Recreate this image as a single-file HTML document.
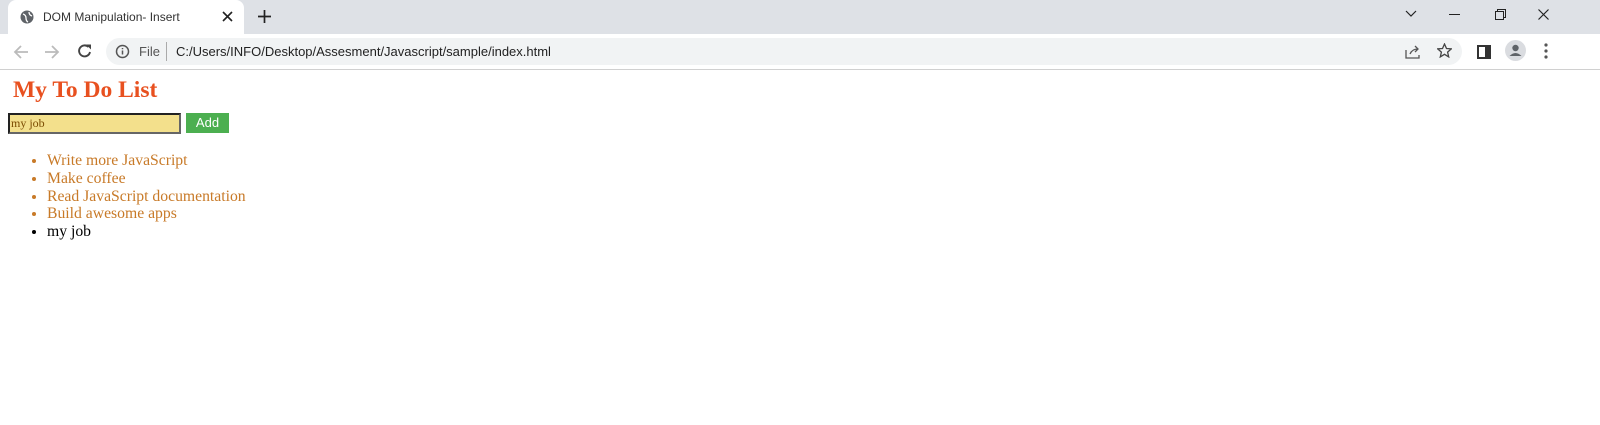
<!DOCTYPE html>
<html><head><style>
body{margin:0;width:1600px;height:425px;background:#fff;position:relative;overflow:hidden;font-family:"Liberation Sans",sans-serif}
.top{position:absolute;left:0;top:0;width:1600px;height:34px;background:#dee1e6}
.tab{position:absolute;left:8px;top:0;width:236px;height:34px;background:#fff;border-radius:8px 8px 0 0}
.bar{position:absolute;left:0;top:34px;width:1600px;height:35px;background:#fff;border-bottom:1px solid #d0d0d0}
.omni{position:absolute;left:106px;top:38px;width:1356px;height:27px;background:#f1f3f4;border-radius:14px}
.t{position:absolute;font-size:12px;color:#333;white-space:nowrap}
h1{position:absolute;left:13px;top:77px;margin:0;font:bold 23.5px "Liberation Serif",serif;color:#e8501f}
.inp{position:absolute;left:8px;top:113px;width:168px;height:17px;background:#f3e08c;border:2px solid #444;border-color:#222 #666 #666 #222;font:12px "Liberation Serif",serif;color:#7a4a00;line-height:17px;padding-left:1px}
.btn{position:absolute;left:186px;top:113px;width:43px;height:20px;background:#4caf50;color:#fff;font-size:13px;text-align:center;line-height:20px}
ul{position:absolute;left:0;top:152px;margin:0;padding-left:47px;font:15.7px/17.8px "Liberation Serif",serif;color:#c87a28}
li::marker{color:#c87a28}
li.k{color:#000}li.k::marker{color:#000}
</style></head><body>
<div class="top"></div>
<div class="tab"></div>
<svg style="position:absolute;left:20px;top:10px" width="14" height="14"><circle cx="7" cy="7" r="6.5" fill="#5f6368"/><path d="M3 4q3 1 3 4t2 4M9 2q0 3 3 4" stroke="#fff" stroke-width="1.3" fill="none"/></svg>
<div class="t" style="left:43px;top:10px">DOM Manipulation- Insert</div>
<svg style="position:absolute;left:222px;top:11px" width="11" height="11"><path d="M1 1L10 10M10 1L1 10" stroke="#222" stroke-width="1.6"/></svg>
<svg style="position:absolute;left:258px;top:10px" width="13" height="13"><path d="M6.5 0v13M0 6.5h13" stroke="#222" stroke-width="1.7"/></svg>
<svg style="position:absolute;left:1405px;top:10px" width="12" height="8"><path d="M1 1l5 5 5-5" stroke="#222" stroke-width="1.2" fill="none"/></svg>
<div style="position:absolute;left:1449px;top:14px;width:11px;height:1px;background:#222"></div>
<svg style="position:absolute;left:1495px;top:9px" width="11" height="11"><path d="M0.5 2.5h8v8h-8zM2.5 2.5v-2h8v8h-2" stroke="#222" fill="none"/></svg>
<svg style="position:absolute;left:1538px;top:9px" width="11" height="11"><path d="M0.5 0.5l10 10M10.5 0.5l-10 10" stroke="#222" stroke-width="1.2"/></svg>
<div class="bar"></div>
<div class="omni"></div>
<svg style="position:absolute;left:13px;top:44px" width="16" height="16"><path d="M15 8H2M8 2L2 8l6 6" stroke="#bbb" stroke-width="1.8" fill="none"/></svg>
<svg style="position:absolute;left:44px;top:44px" width="16" height="16"><path d="M1 8h13M8 2l6 6-6 6" stroke="#bbb" stroke-width="1.8" fill="none"/></svg>
<svg style="position:absolute;left:77px;top:43px" width="16" height="16"><path d="M13 9A5.5 5.5 0 1 1 11.5 4" stroke="#444" stroke-width="1.9" fill="none"/><path d="M9 1.5h5v5z" fill="#444"/></svg>
<svg style="position:absolute;left:115px;top:44px" width="15" height="15"><circle cx="7.5" cy="7.5" r="6" stroke="#555" stroke-width="1.5" fill="none"/><path d="M7.5 6.5v4M7.5 4v1.2" stroke="#555" stroke-width="1.5"/></svg>
<div class="t" style="left:139px;top:44px;font-size:13px;color:#555">File</div>
<div style="position:absolute;left:166px;top:42px;width:1px;height:19px;background:#aaa"></div>
<div class="t" style="left:176px;top:44px;font-size:13px;color:#222">C:/Users/INFO/Desktop/Assesment/Javascript/sample/index.html</div>
<svg style="position:absolute;left:1405px;top:44px" width="16" height="15"><path d="M1 6v8h13v-3M5 10q2-5 8-5M10 2l3 3-3 3" stroke="#555" stroke-width="1.3" fill="none"/></svg>
<svg style="position:absolute;left:1437px;top:43px" width="15" height="15"><path d="M7.5 1l2 4.5 4.8.4-3.7 3.2 1.1 4.8-4.2-2.6-4.2 2.6 1.1-4.8L0.7 5.9l4.8-.4z" stroke="#444" stroke-width="1.3" fill="none"/></svg>
<div style="position:absolute;left:1477px;top:45px;width:6px;height:10px;border:2px solid #333;border-right-width:6px"></div>
<div style="position:absolute;left:1505px;top:40px;width:21px;height:21px;border-radius:50%;background:#dadce0"></div>
<svg style="position:absolute;left:1505px;top:40px" width="21" height="21"><circle cx="10.5" cy="8" r="3.2" fill="#5f6368"/><path d="M4.5 16q6-6 12 0z" fill="#5f6368"/></svg>
<svg style="position:absolute;left:1544px;top:43px" width="4" height="16"><circle cx="2" cy="2" r="1.6" fill="#555"/><circle cx="2" cy="8" r="1.6" fill="#555"/><circle cx="2" cy="14" r="1.6" fill="#555"/></svg>
<h1>My To Do List</h1>
<div class="inp">my job</div>
<div class="btn">Add</div>
<ul><li>Write more JavaScript</li><li>Make coffee</li><li>Read JavaScript documentation</li><li>Build awesome apps</li><li class="k">my job</li></ul>
</body></html>
